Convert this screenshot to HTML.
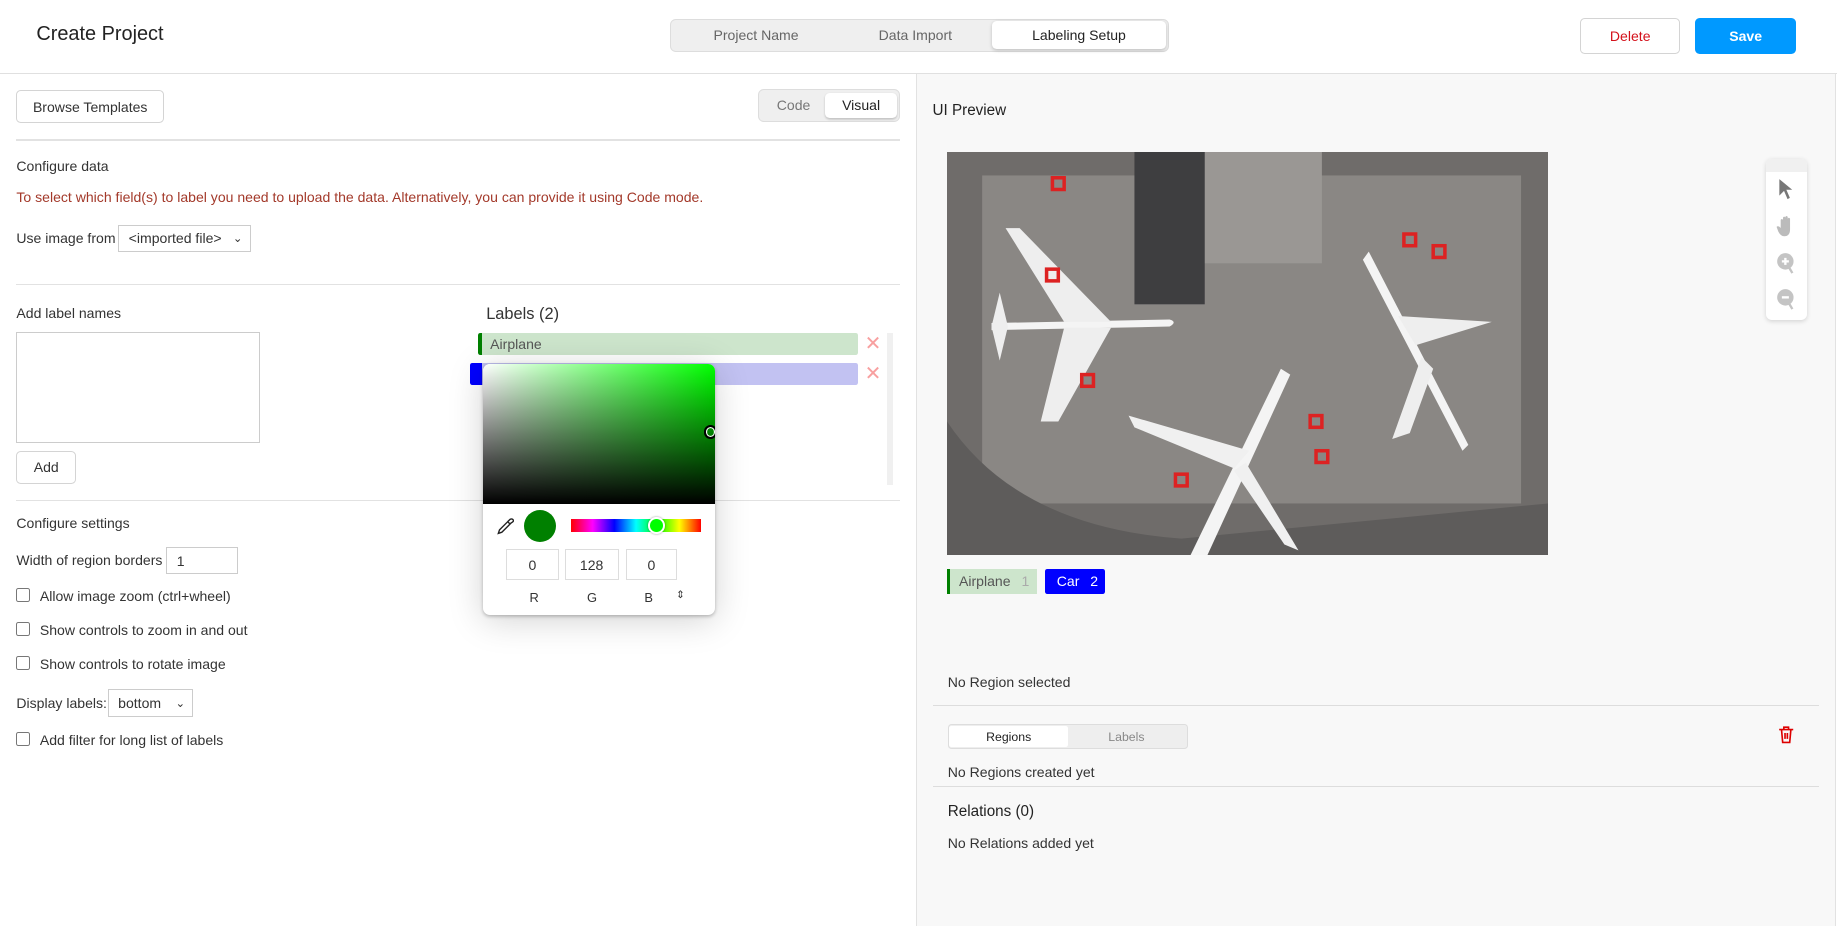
<!DOCTYPE html>
<html><head><meta charset="utf-8"><style>
html{zoom:1.17156}
body{margin:0;width:1568px;height:790px;overflow:hidden;font-family:"Liberation Sans",Arial,sans-serif;font-size:12px;color:#333;background:#fff;position:relative}
.a{position:absolute}
.btn{position:absolute;border:1px solid #d4d4d4;border-radius:4px;background:#fff;box-sizing:border-box;display:flex;align-items:center;justify-content:center}
.hr{position:absolute;height:1px;background:#e2e2e2}
.cb{position:absolute;width:10px;height:10px;border:1px solid #777;border-radius:2px;background:#fff}
.sel{position:absolute;border:1px solid #ccc;box-sizing:border-box;background:#fff;display:flex;align-items:center;padding-left:8px;font-size:12px}
</style></head><body>
<div class="a" style="left:31px;top:20px;font-size:17px;color:#222">Create Project</div>
<div class="a" style="left:572px;top:16px;width:426px;height:28px;background:#efefef;border:1px solid #ddd;border-radius:5px;box-sizing:border-box"></div>
<div class="a" style="left:609px;top:23px;color:#666">Project Name</div>
<div class="a" style="left:750px;top:23px;color:#666">Data Import</div>
<div class="a" style="left:847px;top:18px;width:148px;height:24px;background:#fff;border-radius:4px;box-shadow:0 1px 3px rgba(0,0,0,.2);display:flex;align-items:center;justify-content:center;color:#222">Labeling Setup</div>
<div class="btn" style="left:1349px;top:15px;width:85px;height:31px;color:#d4111b">Delete</div>
<div class="btn" style="left:1447px;top:15px;width:86px;height:31px;background:#0099ff;border-color:#0099ff;color:#fff;font-weight:bold">Save</div>
<div class="hr" style="left:0;top:62px;width:1568px;background:#e0e0e0"></div>
<div class="a" style="left:782px;top:63px;width:785px;height:727px;background:#f8f8f8;border-left:1px solid #e2e2e2;border-right:1px solid #e2e2e2;box-sizing:border-box"></div>
<div class="btn" style="left:14px;top:77px;width:126px;height:28px;color:#333">Browse Templates</div>
<div class="a" style="left:647px;top:76px;width:121px;height:28px;background:#efefef;border:1px solid #ddd;border-radius:5px;box-sizing:border-box"></div>
<div class="a" style="left:663px;top:83px;color:#777">Code</div>
<div class="a" style="left:704px;top:79px;width:62px;height:22px;background:#fff;border-radius:4px;box-shadow:0 1px 2px rgba(0,0,0,.2);display:flex;align-items:center;justify-content:center;color:#222">Visual</div>
<div class="hr" style="left:14px;top:119px;width:754px"></div>
<div class="a" style="left:14px;top:135px">Configure data</div>
<div class="a" style="left:14px;top:161px;color:#a3392a">To select which field(s) to label you need to upload the data. Alternatively, you can provide it using Code mode.</div>
<div class="a" style="left:14px;top:196px">Use image from</div>
<div class="sel" style="left:101px;top:192px;width:113px;height:23px">&lt;imported file&gt;<span style="position:absolute;right:6px;font-size:10px">&#x2304;</span></div>
<div class="hr" style="left:14px;top:242px;width:754px"></div>
<div class="a" style="left:14px;top:260px">Add label names</div>
<div class="a" style="left:14px;top:283px;width:208px;height:95px;border:1px solid #ccc;box-sizing:border-box"></div>
<div class="btn" style="left:14px;top:385px;width:51px;height:28px">Add</div>
<div class="a" style="left:415px;top:260px;font-size:14px;color:#333">Labels (2)</div>
<div class="a" style="left:408px;top:284px;width:324px;height:19px;background:#cde5cc;border-left:4px solid #008000;border-radius:2px;box-sizing:border-box;padding-left:7px;line-height:19px;color:#555">Airplane</div>
<div class="a" style="left:738px;top:283px;color:#f8a0a0;font-size:17px">✕</div>
<div class="a" style="left:401px;top:310px;width:331px;height:19px;background:#c2c2f2;border-left:11px solid #0000ff;border-radius:2px;box-sizing:border-box"></div>
<div class="a" style="left:738px;top:309px;color:#f8a0a0;font-size:17px">✕</div>
<div class="a" style="left:757px;top:284px;width:5px;height:130px;background:#f0f0f0"></div>
<div class="hr" style="left:14px;top:427px;width:754px"></div>
<div class="a" style="left:14px;top:440px">Configure settings</div>
<div class="a" style="left:14px;top:471px">Width of region borders</div>
<div class="sel" style="left:142px;top:467px;width:61px;height:23px">1</div>
<div class="cb" style="left:14px;top:502px"></div><div class="a" style="left:34px;top:502px">Allow image zoom (ctrl+wheel)</div>
<div class="cb" style="left:14px;top:531px"></div><div class="a" style="left:34px;top:531px">Show controls to zoom in and out</div>
<div class="cb" style="left:14px;top:560px"></div><div class="a" style="left:34px;top:560px">Show controls to rotate image</div>
<div class="a" style="left:14px;top:593px">Display labels:</div>
<div class="sel" style="left:92px;top:588px;width:73px;height:24px">bottom<span style="position:absolute;right:6px;font-size:10px">&#x2304;</span></div>
<div class="cb" style="left:14px;top:625px"></div><div class="a" style="left:34px;top:625px">Add filter for long list of labels</div>
<div class="a" style="left:412px;top:311px;width:198px;height:214px;background:#fff;border-radius:6px;box-shadow:0 4px 30px rgba(0,0,0,.18),0 1px 3px rgba(0,0,0,.25);overflow:hidden">
 <div style="position:absolute;left:0;top:0;width:198px;height:119px;background:linear-gradient(to top,#000,rgba(0,0,0,0)),linear-gradient(to right,#fff,#00ff00)"></div>
 <div style="position:absolute;left:189px;top:52px;width:8px;height:8px;border:2px solid #000;border-radius:50%;box-shadow:0 0 0 1px #fff inset"></div>
 <svg style="position:absolute;left:11px;top:130px" width="16" height="16" viewBox="0 0 16 16"><path d="M2 14 L3 11 L10 4 L12 6 L5 13 Z M10 4 L12 2 Q14 1 15 3 Q15 4 13 5 L12 6" fill="none" stroke="#222" stroke-width="1.2"/></svg>
 <div style="position:absolute;left:35px;top:124px;width:28px;height:28px;border-radius:50%;background:#008000"></div>
 <div style="position:absolute;left:75px;top:132px;width:111px;height:11px;background:linear-gradient(to right,#f00,#f0f,#00f,#0ff,#0f0,#ff0,#f00)"></div>
 <div style="position:absolute;left:141px;top:130px;width:11px;height:11px;border-radius:50%;background:#0f0;border:2px solid #fff;box-shadow:0 0 2px rgba(0,0,0,.4)"></div>
 <div style="position:absolute;left:20px;top:158px;width:45px;height:26px;border:1px solid #ddd;box-sizing:border-box;display:flex;align-items:center;justify-content:center">0</div>
 <div style="position:absolute;left:70px;top:158px;width:46px;height:26px;border:1px solid #ddd;box-sizing:border-box;display:flex;align-items:center;justify-content:center">128</div>
 <div style="position:absolute;left:122px;top:158px;width:44px;height:26px;border:1px solid #ddd;box-sizing:border-box;display:flex;align-items:center;justify-content:center">0</div>
 <div style="position:absolute;left:40px;top:193px;font-size:11px">R</div>
 <div style="position:absolute;left:89px;top:193px;font-size:11px">G</div>
 <div style="position:absolute;left:138px;top:193px;font-size:11px">B</div>
 <div style="position:absolute;left:165px;top:192px;font-size:9px">⇕</div>
</div>
<div class="a" style="left:796px;top:87px;font-size:13px;color:#222">UI Preview</div>
<svg class="a" style="left:808px;top:130px" width="513" height="344" viewBox="0 0 513 344">
 <rect width="513" height="344" fill="#6f6c6a"/>
 <rect x="30" y="20" width="460" height="280" fill="#8a8784"/>
 <rect x="210" y="0" width="110" height="95" fill="#9a9794"/>
 <rect x="160" y="0" width="60" height="130" fill="#3e3e40"/>
 <path d="M0 230 Q60 320 200 330 L513 300 L513 344 L0 344Z" fill="#5e5c5b"/>
 <path d="M38 146 L190 143 Q197 145 190 149 L38 152 Z" fill="#f4f4f4"/>
 <path d="M100 145 L50 65 L62 65 L140 145 Z M100 150 L80 230 L95 230 L140 150Z" fill="#eee"/>
 <path d="M38 149 L45 120 L52 149 L45 178Z" fill="#eee"/>
 <path d="M360 85 L445 250 L440 255 L355 92Z" fill="#f4f4f4"/>
 <path d="M385 140 L465 145 L400 165Z M405 175 L380 245 L395 240 L415 185Z" fill="#eee"/>
 <path d="M293 190 L215 360 L205 350 L285 185Z" fill="#f4f4f4"/>
 <path d="M258 255 L155 225 L160 235 L245 270Z M255 265 L300 340 L288 335 L245 272Z" fill="#f0f0f0"/>
 <g fill="none" stroke="#d22" stroke-width="3"><rect x="90" y="22" width="10" height="10"/><rect x="390" y="70" width="10" height="10"/><rect x="415" y="80" width="10" height="10"/><rect x="115" y="190" width="10" height="10"/><rect x="310" y="225" width="10" height="10"/><rect x="315" y="255" width="10" height="10"/><rect x="195" y="275" width="10" height="10"/><rect x="85" y="100" width="10" height="10"/></g>
</svg>
<div class="a" style="left:1507px;top:136px;width:35px;height:137px;background:#fff;border-radius:5px;box-shadow:0 1px 4px rgba(0,0,0,.15)">
 <div style="height:11px;background:#f0f0f0;border-radius:5px 5px 0 0"></div>
 <svg style="position:absolute;left:10px;top:16px" width="16" height="20" viewBox="0 0 16 20"><path d="M2 1 L13 10 L8 10 L11 17 L9 18 L6 11 L2 15Z" fill="#777"/></svg>
 <svg style="position:absolute;left:9px;top:47px" width="18" height="20" viewBox="0 0 18 20"><path d="M4 12 V5 Q5 3.5 6 5 V10 V3 Q7 1.5 8 3 V10 V2.5 Q9 1 10 2.5 V10 V4 Q11 2.5 12 4 V13 Q12 19 7 19 Q4 19 2 15 L0.5 11 Q1.5 10 3 11Z" fill="#bbb"/></svg>
 <svg style="position:absolute;left:9px;top:79px" width="18" height="20" viewBox="0 0 18 20"><circle cx="8" cy="8" r="7" fill="#c4c4c4"/><path d="M11 13 L14 18" stroke="#c4c4c4" stroke-width="2"/><path d="M5 8 H11 M8 5 V11" stroke="#fff" stroke-width="2"/></svg>
 <svg style="position:absolute;left:9px;top:110px" width="18" height="20" viewBox="0 0 18 20"><circle cx="8" cy="8" r="7" fill="#c4c4c4"/><path d="M11 13 L14 18" stroke="#c4c4c4" stroke-width="2"/><path d="M5 8 H11" stroke="#fff" stroke-width="2"/></svg>
</div>
<div class="a" style="left:808px;top:486px;width:77px;height:21px;background:#cde5cc;border-left:3px solid #008000;box-sizing:border-box;padding-left:8px;line-height:21px;color:#555">Airplane <span style="color:#aaa;margin-left:6px">1</span></div>
<div class="a" style="left:892px;top:486px;width:51px;height:21px;background:#0000ff;border-radius:2px;box-sizing:border-box;padding-left:10px;line-height:21px;color:#fff">Car <span style="margin-left:6px">2</span></div>
<div class="a" style="left:809px;top:575px">No Region selected</div>
<div class="hr" style="left:796px;top:602px;width:757px;background:#ddd"></div>
<div class="a" style="left:809px;top:618px;width:205px;height:21px;background:#eee;border:1px solid #ddd;border-radius:3px;box-sizing:border-box"></div>
<div class="a" style="left:810px;top:620px;width:102px;height:18px;background:#fff;border-radius:2px;display:flex;align-items:center;justify-content:center;font-size:10.5px;color:#222">Regions</div>
<div class="a" style="left:946px;top:623px;font-size:10.5px;color:#888">Labels</div>
<svg class="a" style="left:1518px;top:620px" width="14" height="16" viewBox="0 0 14 16"><path d="M1 3 H13 M5 3 V1 H9 V3 M3 3 L4 14 H10 L11 3 M6 6 V11 M8 6 V11" fill="none" stroke="#d00" stroke-width="1.4"/></svg>
<div class="a" style="left:809px;top:652px">No Regions created yet</div>
<div class="hr" style="left:796px;top:671px;width:757px;background:#ddd"></div>
<div class="a" style="left:809px;top:685px;font-size:13px;color:#222">Relations (0)</div>
<div class="a" style="left:809px;top:713px">No Relations added yet</div>
</body></html>
